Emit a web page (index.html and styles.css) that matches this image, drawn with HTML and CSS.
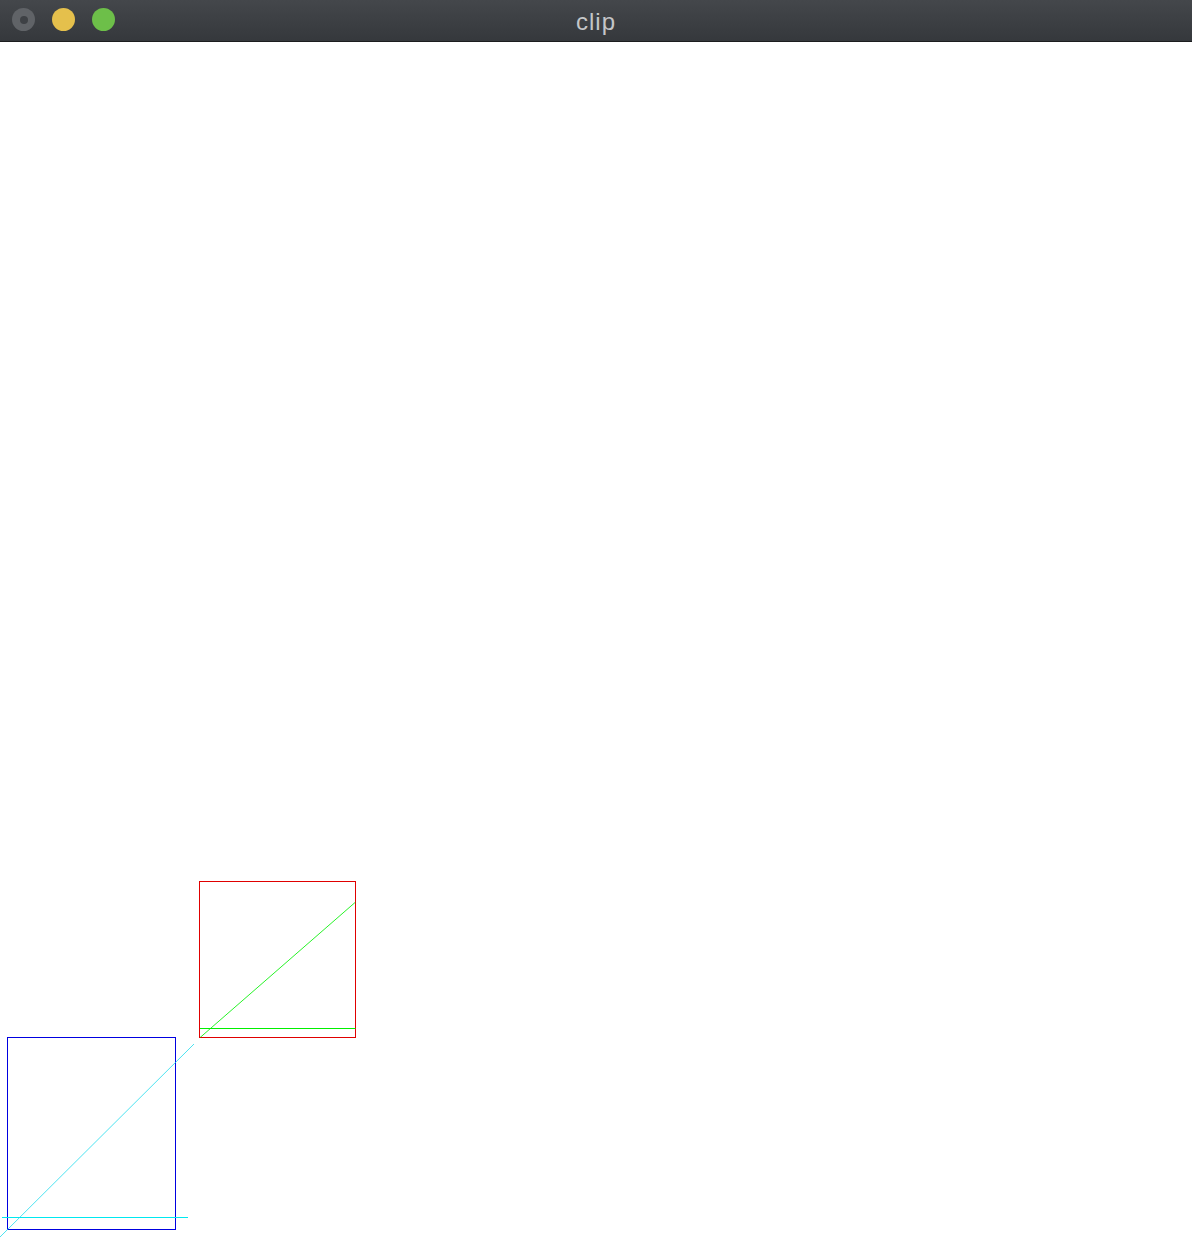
FILE: index.html
```html
<!DOCTYPE html>
<html>
<head>
<meta charset="utf-8">
<title>clip</title>
<link rel="stylesheet" href="styles.css">
</head>
<body>
<div class="window">
  <header class="titlebar">
    <div class="lights">
      <span class="light light-close"><span class="dot"></span></span>
      <span class="light light-min"></span>
      <span class="light light-max"></span>
    </div>
    <div class="title">clip</div>
  </header>
  <svg class="stage" width="1192" height="1198" viewBox="0 42 1192 1198" xmlns="http://www.w3.org/2000/svg">
    <defs>
      <clipPath id="redclip">
        <rect x="200" y="882" width="155.5" height="155.5"/>
      </clipPath>
    </defs>
    <rect x="7.5" y="1037.5" width="168" height="192" fill="none" stroke="#0000e0" stroke-width="1"/>
    <line x1="2" y1="1217.5" x2="188" y2="1217.5" stroke="#00e8f0" stroke-width="1"/>
    <line x1="-3" y1="1240" x2="194" y2="1044" stroke="#20dcec" stroke-width="0.8"/>
    <rect x="199.5" y="881.5" width="156" height="156" fill="none" stroke="#e00000" stroke-width="1"/>
    <g clip-path="url(#redclip)">
      <line x1="200" y1="1028.5" x2="356" y2="1028.5" stroke="#00f000" stroke-width="1"/>
      <line x1="200" y1="1037.6" x2="355.6" y2="902" stroke="#00f000" stroke-width="0.85"/>
    </g>
  </svg>
</div>
</body>
</html>
```

FILE: styles.css
```css
html, body {
  margin: 0;
  padding: 0;
  background: #ffffff;
}
.window {
  width: 1192px;
  height: 1240px;
  overflow: hidden;
  background: #ffffff;
}
.titlebar {
  position: relative;
  height: 41px;
  border-bottom: 1px solid #1c1d1f;
  background: linear-gradient(#44474b, #35383c);
  display: flex;
  align-items: center;
  justify-content: center;
}
.lights {
  position: absolute;
  left: 12px;
  top: 8px;
  display: flex;
  gap: 17px;
}
.light {
  width: 23px;
  height: 23px;
  border-radius: 50%;
  display: flex;
  align-items: center;
  justify-content: center;
}
.light-close {
  background: #606367;
}
.light-close .dot {
  width: 8px;
  height: 8px;
  border-radius: 50%;
  background: #3e4145;
}
.light-min {
  background: #e5c04c;
}
.light-max {
  background: #6dbf49;
}
.title {
  font-family: "Liberation Sans", Arial, sans-serif;
  font-size: 24px;
  letter-spacing: 1px;
  color: #c4c6c8;
  line-height: 41px;
  padding-top: 1px;
}
.stage {
  display: block;
}
```
